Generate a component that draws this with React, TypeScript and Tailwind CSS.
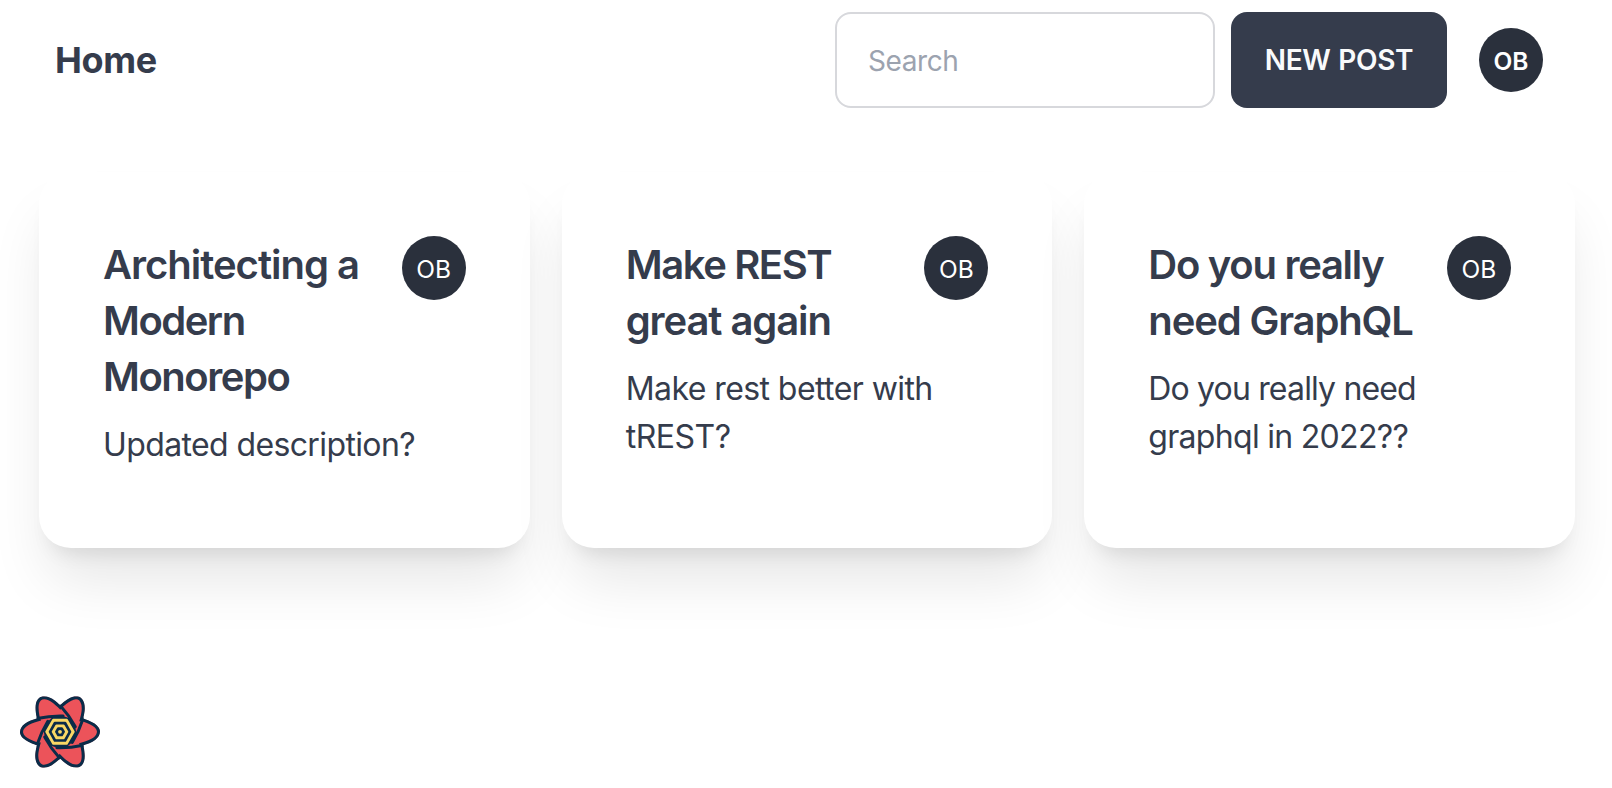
const FONT = "font-['Inter','Liberation_Sans',sans-serif]";

type Line = { text: string; tracking: string };

const posts: { title: Line[]; body: Line[] }[] = [
  {
    title: [
      { text: 'Architecting a', tracking: 'tracking-[-1.02px]' },
      { text: 'Modern', tracking: 'tracking-[-1.5px]' },
      { text: 'Monorepo', tracking: 'tracking-[-1.45px]' },
    ],
    body: [{ text: 'Updated description?', tracking: 'tracking-[-0.62px]' }],
  },
  {
    title: [
      { text: 'Make REST', tracking: 'tracking-[-1.4px]' },
      { text: 'great again', tracking: 'tracking-[-1.08px]' },
    ],
    body: [
      { text: 'Make rest better with', tracking: 'tracking-[-0.57px]' },
      { text: 'tREST?', tracking: 'tracking-[-0.5px]' },
    ],
  },
  {
    title: [
      { text: 'Do you really', tracking: 'tracking-[-1.28px]' },
      { text: 'need GraphQL', tracking: 'tracking-[-1.15px]' },
    ],
    body: [
      { text: 'Do you really need', tracking: 'tracking-[-0.84px]' },
      { text: 'graphql in 2022??', tracking: 'tracking-[-0.7px]' },
    ],
  },
];

function Avatar({ bold = false }: { bold?: boolean }) {
  return (
    <div className="flex size-16 shrink-0 items-center justify-center rounded-full bg-[#2a303c] pt-px text-[24.5px] leading-8 text-white">
      <span className={bold ? 'font-semibold' : 'font-normal'}>OB</span>
    </div>
  );
}

const SILHOUETTE =
  'M72.7239712,61.3436237 C69.631224,46.362877 68.9675112,34.8727722 70.9666331,26.5293551 C72.1555965,21.5671678 74.3293088,17.5190846 77.6346064,14.5984631 C81.1241394,11.5150478 85.5360327,10.0020122 90.493257,10.0020122 C98.6712013,10.0020122 107.26826,13.7273214 116.455725,20.8044264 C120.20312,23.6910458 124.092437,27.170411 128.131651,31.2444746 C128.45314,30.8310265 128.816542,30.4410453 129.22143,30.0806152 C140.64098,19.9149716 150.255245,13.5989272 158.478408,11.1636507 C163.367899,9.715636 167.958526,9.57768202 172.138936,10.983031 C176.551631,12.4664684 180.06766,15.5329489 182.548314,19.8281091 C186.642288,26.9166735 187.721918,36.2310983 186.195595,47.7320243 C185.573451,52.4199112 184.50985,57.5263831 183.007094,63.0593153 C183.574045,63.1277086 184.142416,63.2532808 184.705041,63.4395297 C199.193932,68.2358678 209.453582,73.3937462 215.665021,79.2882839 C219.360669,82.7953831 221.773972,86.6998434 222.646365,91.0218204 C223.567176,95.5836746 222.669313,100.159332 220.191548,104.451297 C216.105211,111.529614 208.591643,117.11221 197.887587,121.534031 C193.589552,123.309539 188.726579,124.917559 183.293259,126.363748 C183.541176,126.92292 183.733521,127.516759 183.862138,128.139758 C186.954886,143.120505 187.618598,154.61061 185.619477,162.954027 C184.430513,167.916214 182.256801,171.964297 178.951503,174.884919 C175.46197,177.968334 171.050077,179.48137 166.092853,179.48137 C157.914908,179.48137 149.31785,175.756061 140.130385,168.678956 C136.343104,165.761613 132.410866,162.238839 128.325434,158.108619 C127.905075,158.765474 127.388968,159.376011 126.77857,159.919385 C115.35902,170.085028 105.744755,176.401073 97.5215915,178.836349 C92.6321009,180.284364 88.0414736,180.422318 83.8610636,179.016969 C79.4483686,177.533532 75.9323404,174.467051 73.4516862,170.171891 C69.3577116,163.083327 68.2780823,153.768902 69.8044053,142.267976 C70.449038,137.410634 71.56762,132.103898 73.1575891,126.339009 C72.5361041,126.276104 71.9120754,126.144816 71.2949591,125.940529 C56.8060684,121.144191 46.5464184,115.986313 40.3349789,110.091775 C36.6393312,106.584675 34.2260275,102.680215 33.3536352,98.3582381 C32.4328237,93.7963839 33.3306866,89.2207269 35.8084524,84.9287618 C39.8947886,77.8504443 47.4083565,72.2678481 58.1124133,67.8460273 C62.5385143,66.0176154 67.5637208,64.366822 73.1939394,62.8874674 C72.9933393,62.3969171 72.8349374,61.8811235 72.7239712,61.3436237 Z';

const ANGLES = [0, 60, 120, 180, 240, 300];

function FlowerLogo() {
  return (
    <svg width="80" height="80" viewBox="33 0 190 190">
      <clipPath id="flower">
        <path d={SILHOUETTE} />
      </clipPath>
      <g clipPath="url(#flower)">
        <path d={SILHOUETTE} fill="#ec535a" stroke="#0a2c49" strokeWidth="14.5" />
        {ANGLES.map((a) => (
          <g key={a} transform={`rotate(${a} 128 94.7)`}>
            <path d="M183,63 Q173,94 157,120" fill="none" stroke="#0a2c49" strokeWidth="7" strokeLinecap="round" />
            <path d="M128,94.700 L164,82 L167,98 L157,120 Z" fill="#0a2c49" />
          </g>
        ))}
      </g>
      <g strokeLinejoin="round">
        <path d="M112,66 H144 L160.500,94.500 L144,123 H112 L95.500,94.500 Z" fill="#f8d865" stroke="#0a2c49" strokeWidth="10" />
        <path d="M112,66 H144 L160.500,94.500 L144,123 H112 L95.500,94.500 Z" fill="#f8d865" stroke="#f8d865" strokeWidth="5" />
        <path d="M115.500,73.300 H140.500 L152.300,94.500 L140.500,115.700 H115.500 L103.700,94.500 Z" fill="#0a2c49" stroke="#0a2c49" strokeWidth="5" />
        <path d="M119.500,79.500 H136.500 L145.200,94.500 L136.500,109.500 H119.500 L110.800,94.500 Z" fill="#f8d865" stroke="#f8d865" strokeWidth="5" />
        <path d="M123.500,86.200 H132.500 L137.300,94.500 L132.500,102.800 H123.500 L118.700,94.500 Z" fill="#0a2c49" stroke="#0a2c49" strokeWidth="5" />
      </g>
      <circle cx="128" cy="94.500" r="4.500" fill="#f8d865" />
    </svg>
  );
}

function Lines({ lines }: { lines: Line[] }) {
  return (
    <>
      {lines.map((line) => (
        <span key={line.text} className={`block ${line.tracking}`}>
          {line.text}
        </span>
      ))}
    </>
  );
}

export default function App() {
  return (
    <div className={`${FONT} flex h-[788px] flex-col overflow-hidden bg-white text-[#353c4c]`}>
      <header className="flex h-[120px] shrink-0 items-center pr-[69px] pl-[55px]">
        <a className="flex-1 text-[36px] leading-[56px] font-bold tracking-[-0.35px]">Home</a>
        <input
          type="text"
          placeholder="Search"
          className="mr-4 h-24 w-[380px] rounded-2xl border-2 border-[#d7d8dc] bg-white pt-0.5 pr-8 pl-[31px] text-[28px] tracking-[-0.4px] outline-none placeholder:text-[#9ca3af]"
        />
        <button className="mr-8 h-24 w-[216px] rounded-2xl bg-[#353c4c] text-[28px] font-semibold tracking-[-0.35px] text-[#f9fafb] [word-spacing:1px]">
          NEW POST
        </button>
        <Avatar bold />
      </header>
      <main className="mt-[52px] grid grid-cols-3 gap-8 pr-[37px] pl-[39px]">
        {posts.map((post) => (
          <article
            key={post.title[0].text}
            className="flex h-[376px] items-start justify-between rounded-[32px] bg-white p-16 shadow-[0_40px_58px_-9px_rgba(0,0,0,0.1),0_16px_20px_-12px_rgba(0,0,0,0.1)]"
          >
            <div className="flex flex-col gap-4 pt-px whitespace-nowrap">
              <h2 className="text-[40px] leading-[56px] font-semibold">
                <Lines lines={post.title} />
              </h2>
              <p className="text-[32px] leading-[48px]">
                <Lines lines={post.body} />
              </p>
            </div>
            <div className="-ml-16">
              <Avatar />
            </div>
          </article>
        ))}
      </main>
      <footer className="mt-auto pb-4 pl-5">
        <FlowerLogo />
      </footer>
    </div>
  );
}
